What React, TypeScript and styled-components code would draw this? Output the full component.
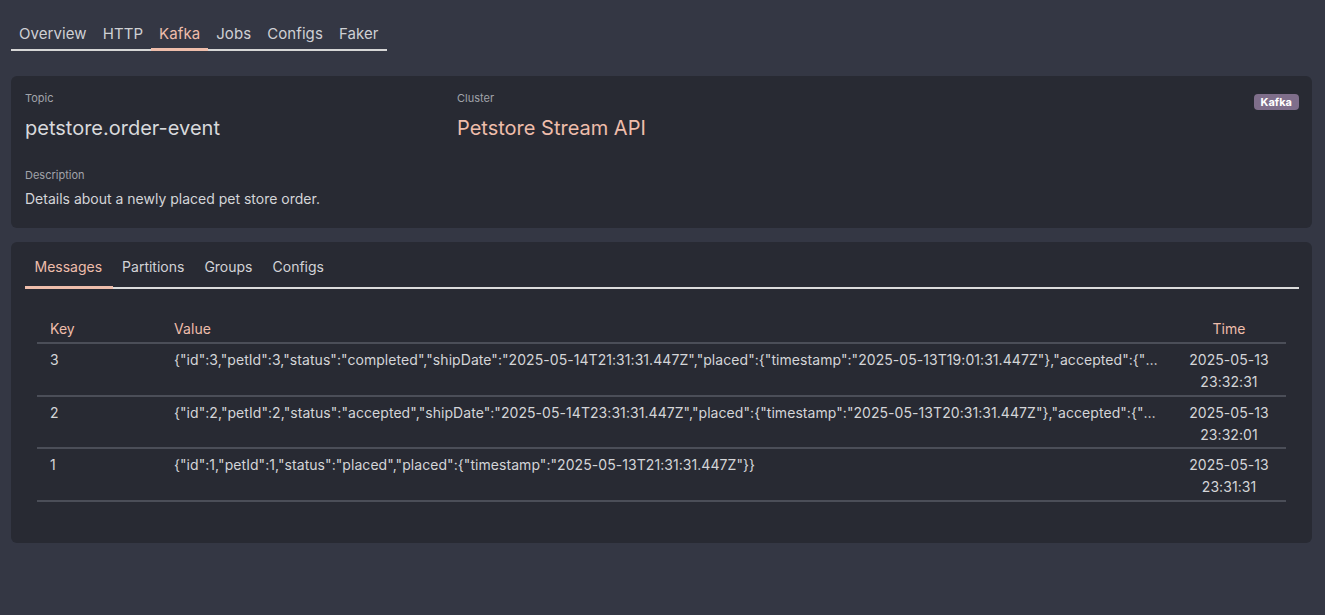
import React from "react";
import styled, { createGlobalStyle } from "styled-components";

const Global = createGlobalStyle`
  html, body { margin: 0; padding: 0; background: #343744; }
  body { font-family: Inter, "Noto Sans", sans-serif; color: #d4d4d8; }
  * { box-sizing: border-box; }
`;

const Page = styled.div`
  padding: 11px 13px 0 11px;
  display: flex;
  flex-direction: column;
  gap: 14px;
`;

const NavBar = styled.nav`
  display: inline-flex;
  align-self: flex-start;
  border-bottom: 2px solid #d6d6d6;
  margin-bottom: 11px;
`;

const NavTab = styled.div<{ $active?: boolean }>`
  font-size: 15px;
  line-height: 20px;
  padding: 13px 8px 5px;
  letter-spacing: 0.08px;
  color: ${(p) => (p.$active ? "#eebdab" : "#cfd0d4")};
  position: relative;
  &::after {
    content: "";
    position: absolute;
    left: 0;
    right: 0;
    bottom: -2px;
    height: 3px;
    background: ${(p) => (p.$active ? "#eebdab" : "transparent")};
  }
`;

const Card = styled.section`
  background: #282a33;
  border-radius: 6px;
  padding: 14px 13px 14px 14px;
`;

const InfoCard = styled(Card)`
  display: grid;
  grid-template-columns: 432px 1fr auto;
  row-gap: 25px;
  padding-top: 15px;
  padding-bottom: 19px;
`;

const Field = styled.div<{ $span?: number; $gap?: number }>`
  display: flex;
  flex-direction: column;
  gap: ${(p) => p.$gap ?? 6}px;
  grid-column: span ${(p) => p.$span ?? 1};
`;

const Label = styled.div`
  font-size: 11px;
  line-height: 14px;
  color: #a1a3aa;
`;

const Title = styled.div<{ $accent?: boolean }>`
  font-size: 20px;
  line-height: 30px;
  color: ${(p) => (p.$accent ? "#eebdab" : "#d8d9dc")};
`;

const Text = styled.div`
  font-size: 14px;
  line-height: 20px;
  color: #d4d5d8;
`;

const Badge = styled.span`
  align-self: start;
  background: #7f6e8b;
  color: #fff;
  font-size: 11px;
  font-weight: 700;
  line-height: 16px;
  padding: 0 7px;
  border-radius: 4px;
  margin-top: 3px;
`;

const SubTabs = styled.div`
  display: flex;
  border-bottom: 2px solid #dcdcdc;
`;

const SubTab = styled.div<{ $active?: boolean }>`
  font-size: 14px;
  line-height: 20px;
  padding: 1px 10.5px 10px 9.5px;
  color: ${(p) => (p.$active ? "#eebdab" : "#d2d3d7")};
  position: relative;
  &::after {
    content: "";
    position: absolute;
    left: 0;
    right: 0;
    bottom: -2px;
    height: 3px;
    background: ${(p) => (p.$active ? "#eebdab" : "transparent")};
  }
`;

const TableWrap = styled.div`
  padding: 26px 13px 27px 12px;
`;

const Table = styled.table`
  width: 100%;
  border-collapse: collapse;
  table-layout: fixed;
  font-size: 14px;
  letter-spacing: 0.06px;
`;

const Th = styled.th<{ $align?: string; $w?: number }>`
  text-align: ${(p) => p.$align ?? "left"};
  font-weight: 400;
  color: #eebdab;
  padding: 4px 13px 3px;
  line-height: 20px;
  border-bottom: 2px solid #4b4e58;
  ${(p) => (p.$w ? `width: ${p.$w}px;` : "")}
`;

const Td = styled.td<{ $align?: string; $truncate?: boolean }>`
  text-align: ${(p) => p.$align ?? "left"};
  vertical-align: top;
  color: #d4d5d8;
  padding: 5px 13px 1.5px;
  line-height: 22px;
  border-bottom: 2px solid #4b4e58;
  ${(p) =>
    p.$truncate
      ? "white-space: nowrap; overflow: hidden; text-overflow: ellipsis;"
      : ""}
`;

const rows = [
  {
    key: "3",
    value:
      '{"id":3,"petId":3,"status":"completed","shipDate":"2025-05-14T21:31:31.447Z","placed":{"timestamp":"2025-05-13T19:01:31.447Z"},"accepted":{"timestamp":"2025-05-13T21:31:31.447Z"},"completed":{"timestamp":"2025-05-14T21:31:31.447Z"}}',
    date: "2025-05-13",
    time: "23:32:31",
  },
  {
    key: "2",
    value:
      '{"id":2,"petId":2,"status":"accepted","shipDate":"2025-05-14T23:31:31.447Z","placed":{"timestamp":"2025-05-13T20:31:31.447Z"},"accepted":{"timestamp":"2025-05-13T22:31:31.447Z"}}',
    date: "2025-05-13",
    time: "23:32:01",
  },
  {
    key: "1",
    value:
      '{"id":1,"petId":1,"status":"placed","placed":{"timestamp":"2025-05-13T21:31:31.447Z"}}',
    date: "2025-05-13",
    time: "23:31:31",
  },
];

export default function App() {
  return (
    <>
      <Global />
      <Page>
        <NavBar>
          {["Overview", "HTTP", "Kafka", "Jobs", "Configs", "Faker"].map((t) => (
            <NavTab key={t} $active={t === "Kafka"}>
              {t}
            </NavTab>
          ))}
        </NavBar>
        <InfoCard>
          <Field $gap={8}>
            <Label>Topic</Label>
            <Title>petstore.order-event</Title>
          </Field>
          <Field $gap={8}>
            <Label>Cluster</Label>
            <Title $accent>Petstore Stream API</Title>
          </Field>
          <Badge>Kafka</Badge>
          <Field $span={3} $gap={7}>
            <Label>Description</Label>
            <Text>Details about a newly placed pet store order.</Text>
          </Field>
        </InfoCard>
        <Card>
          <SubTabs>
            {["Messages", "Partitions", "Groups", "Configs"].map((t) => (
              <SubTab key={t} $active={t === "Messages"}>
                {t}
              </SubTab>
            ))}
          </SubTabs>
          <TableWrap>
            <Table>
              <thead>
                <tr>
                  <Th $w={124}>Key</Th>
                  <Th>Value</Th>
                  <Th $align="center" $w={114}>
                    Time
                  </Th>
                </tr>
              </thead>
              <tbody>
                {rows.map((r) => (
                  <tr key={r.key}>
                    <Td>{r.key}</Td>
                    <Td $truncate>{r.value}</Td>
                    <Td $align="center">
                      {r.date}
                      <br />
                      {r.time}
                    </Td>
                  </tr>
                ))}
              </tbody>
            </Table>
          </TableWrap>
        </Card>
      </Page>
    </>
  );
}
